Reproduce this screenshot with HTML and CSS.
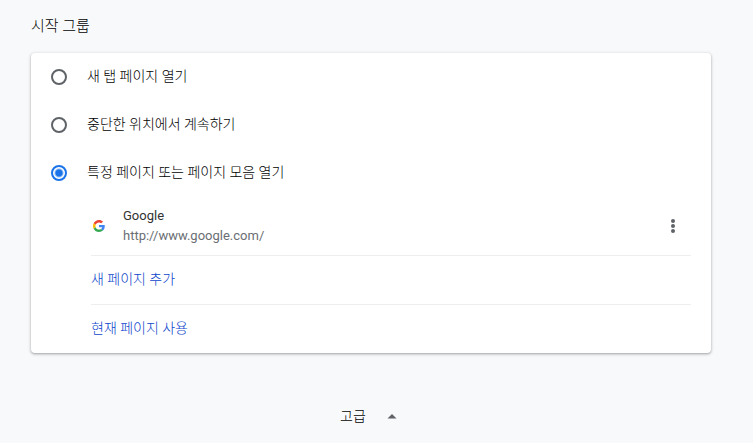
FILE: index.html
```html
<!DOCTYPE html>
<html lang="ko">
  <head>
    <meta charset="UTF-8" />
    <meta name="viewport" content="width=device-width, initial-scale=1.0" />
    <title>설정</title>
    <link rel="stylesheet" href="styles.css">
  </head>
  <body>
    <main>
      <h2>시작 그룹</h2>
      <form class="card">
        <label class="option">
          <input type="radio" name="startup" value="newtab" />
          <span>새 탭 페이지 열기</span>
        </label>
        <label class="option">
          <input type="radio" name="startup" value="continue" />
          <span>중단한 위치에서 계속하기</span>
        </label>
        <label class="option">
          <input type="radio" name="startup" value="pages" checked />
          <span>특정 페이지 또는 페이지 모음 열기</span>
        </label>

        <div class="pages">
          <div class="page">
            <svg class="favicon" viewBox="0 0 48 48" aria-hidden="true">
              <path fill="#ea4335" d="M24 9.5c3.54 0 6.71 1.22 9.21 3.6l6.85-6.85C35.9 2.38 30.47 0 24 0 14.62 0 6.51 5.38 2.56 13.22l7.98 6.19C12.43 13.72 17.74 9.5 24 9.5z" />
              <path fill="#4285f4" d="M46.98 24.55c0-1.57-.15-3.09-.38-4.55H24v9.02h12.94c-.58 2.96-2.26 5.48-4.78 7.18l7.73 6c4.51-4.18 7.09-10.36 7.09-17.65z" />
              <path fill="#fbbc05" d="M10.53 28.59c-.48-1.45-.76-2.99-.76-4.59s.27-3.14.76-4.59l-7.98-6.19C.92 16.46 0 20.12 0 24c0 3.88.92 7.54 2.56 10.78l7.97-6.19z" />
              <path fill="#34a853" d="M24 48c6.48 0 11.93-2.13 15.89-5.81l-7.73-6c-2.15 1.45-4.92 2.3-8.16 2.3-6.26 0-11.57-4.22-13.47-9.91l-7.98 6.19C6.51 42.62 14.62 48 24 48z" />
            </svg>
            <div class="page-info">
              <div class="page-title">Google</div>
              <div class="page-url">http://www.google.com/</div>
            </div>
            <button type="button" class="more" aria-label="추가 작업">
              <svg viewBox="0 0 20 20" width="20" height="20">
                <circle cx="10" cy="5" r="2" />
                <circle cx="10" cy="10" r="2" />
                <circle cx="10" cy="15" r="2" />
              </svg>
            </button>
          </div>
          <div class="action"><a href="#">새 페이지 추가</a></div>
          <div class="action"><a href="#">현재 페이지 사용</a></div>
        </div>
      </form>

      <button type="button" class="advanced">
        <span>고급</span>
        <svg viewBox="0 0 20 20" width="20" height="20">
          <path d="M5.5 12.5L10 8l4.5 4.5z" />
        </svg>
      </button>
    </main>
  </body>
</html>
```
FILE: styles.css
```css
body {
  margin: 0;
  background-color: #f8f9fb;
  color: #000;
  font-family: Roboto, "Noto Sans CJK KR", sans-serif;
  font-size: 14px;
  font-weight: 300;
  line-height: 20px;
}

main {
  display: flex;
  flex-direction: column;
  max-width: 680px;
  margin: 0 42px 0 31px;
  padding-top: 16px;
}

h2 {
  margin: 0 0 17px;
  font-size: 15px;
  font-weight: 300;
  line-height: 20px;
}

.card {
  background-color: #fff;
  border-radius: 4px;
  box-shadow: 0 1px 2px rgba(60, 64, 67, 0.3), 0 1px 3px 1px rgba(60, 64, 67, 0.15);
}

.option {
  display: flex;
  align-items: center;
  gap: 20px;
  height: 48px;
  padding: 0 20px;
}

.option span,
.action a {
  padding-bottom: 2px;
}

input[type="radio"] {
  appearance: none;
  box-sizing: border-box;
  width: 16px;
  height: 16px;
  margin: 0;
  border: 2px solid #5f6368;
  border-radius: 50%;
}

input[type="radio"]:checked {
  border-color: #1a73e8;
  background: radial-gradient(circle, #1a73e8 3px, transparent 5px);
}

.pages {
  margin: 0 20px 0 60px;
}

.page {
  display: flex;
  align-items: center;
  height: 58px;
}

.favicon {
  width: 12px;
  height: 12px;
  margin: 0 18px 0 2px;
}

.page-info {
  flex: 1;
  font-size: 13px;
  font-weight: 400;
}

.page-title {
  color: #333;
}

.page-url {
  color: #6a6e73;
}

button {
  border: none;
  background: none;
  color: inherit;
  font: inherit;
  cursor: pointer;
}

button svg {
  display: block;
  fill: #5f6368;
}

.more {
  padding: 8px;
}

.action {
  display: flex;
  align-items: center;
  height: 48px;
  border-top: 1px solid #eee;
}

.action a {
  color: #0b45cc;
  text-decoration: none;
}

.advanced {
  display: flex;
  align-items: center;
  align-self: center;
  gap: 16px;
  margin-top: 48px;
  padding: 5px;
}
```
